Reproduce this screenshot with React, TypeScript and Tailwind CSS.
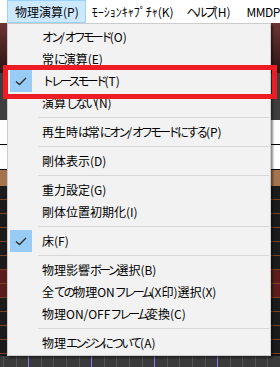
import React from 'react';

type Entry = { label: string; checked?: boolean } | 'sep';

const entries: Entry[] = [
  { label: 'オン/オフモード(O)' },
  { label: '常に演算(E)' },
  { label: 'トレースモード(T)', checked: true },
  { label: '演算しない(N)' },
  'sep',
  { label: '再生時は常にオン/オフモードにする(P)' },
  'sep',
  { label: '剛体表示(D)' },
  'sep',
  { label: '重力設定(G)' },
  { label: '剛体位置初期化(I)' },
  'sep',
  { label: '床(F)', checked: true },
  'sep',
  { label: '物理影響ボーン選択(B)' },
  { label: '全ての物理ONフレーム(X印)選択(X)' },
  { label: '物理ON/OFFフレーム変換(C)' },
  'sep',
  { label: '物理エンジンについて(A)' },
];

const gridRows = [0, 1, 2, 3, 4, 5, 6, 7, 8, 9, 10, 11];
const ticks = Array.from({ length: 22 }, (_, i) => i);

// kana in the UI font are narrower than in Noto, so squeeze them a bit
const Label = ({ text }: { text: string }) => {
  const parts = text.match(/[\u3040-\u309F]+|[\u30A0-\u30FF]+|[^\u3040-\u30FF]+/g) ?? [];
  return (
    <>
      {parts.map((p, i) => {
        const c = p.charCodeAt(0);
        if (c >= 0x3040 && c <= 0x309f) return <span key={i} className="tracking-[-2.4px]">{p}</span>;
        if (c >= 0x30a0 && c <= 0x30ff) return <span key={i} className="tracking-[-3px]">{p}</span>;
        return <span key={i}>{p}</span>;
      })}
    </>
  );
};

const Check = () => (
  <svg width="22" height="22" viewBox="0 0 22 22">
    <path d="M6 11.5 L9.5 14.5 L16 8" fill="none" stroke="#2f2f2f" strokeWidth="1.4" />
  </svg>
);

const App: React.FC = () => {
  return (
    <div className="relative w-[280px] h-[367px] overflow-hidden bg-[#262626] font-['Noto_Sans_CJK_JP']">
      {/* Menu bar */}
      <div className="h-[23px] bg-white flex items-stretch text-[12px] text-black pl-[7px] whitespace-nowrap overflow-hidden">
        <div className="pl-[7px] pr-[6px] border border-[#99d1ff] bg-[#cce8ff] flex items-center">
          <Label text="物理演算(P)" />
        </div>
        <div className="px-[6px] flex items-center">
          <span>ﾓｰｼｮﾝｷｬﾌﾟﾁｬ(K)</span>
        </div>
        <div className="px-[7px] flex items-center">
          <Label text="ヘルプ(H)" />
        </div>
        <div className="pl-[9px] flex items-center">
          <span className="tracking-[-0.5px]">MMDP</span>
        </div>
      </div>

      {/* Background editor view */}
      <div className="flex flex-col">
        <div className="h-[50px] bg-gradient-to-b from-[#6e3434] to-[#2a1414]" />
        <div className="h-[47px] bg-[#3e3e3e]" />
        <div className="h-[50px] bg-white flex flex-col">
          <div className="h-[24px]" />
          <div className="h-px bg-black" />
          <div className="flex-1" />
          <div className="h-px bg-black" />
        </div>
        <div className="h-[16px] bg-[#a5744c]" />
        <div className="h-[170px] flex flex-col bg-[#161616]">
          {gridRows.map((i) => (
            <div
              key={i}
              className={`h-[14px] border-b border-[#7a4020] ${i >= 6 && i <= 7 ? 'bg-[#5a1c1c]' : 'bg-[#1b1b1b]'}`}
            />
          ))}
        </div>
        <div className="h-[11px] bg-[#3a3a3a] flex pl-[3px]">
          {ticks.map((i) => (
            <div
              key={i}
              className={`w-[13px] h-full border-l ${i % 5 === 2 ? 'border-[#8a7cf0]' : 'border-[#555555]'}`}
            />
          ))}
        </div>
      </div>

      {/* Dropdown menu */}
      <div className="absolute left-[7px] top-[23px] w-[264px] bg-[#f2f2f2] border border-[#cccccc] shadow-[2px_2px_2px_rgba(0,0,0,0.45)] pt-[2px] pb-[1px] text-[12px] text-black whitespace-nowrap">
        {entries.map((e, i) =>
          e === 'sep' ? (
            <div key={i} className="h-[7px] flex items-center pl-[30px] pr-[1px]">
              <div className="h-px w-full bg-[#d7d7d7]" />
            </div>
          ) : (
            <div key={i} className="h-[22px] flex items-center pl-[2px]">
              <div className={`w-[22px] h-[22px] ${e.checked ? 'bg-[#99ccf5]' : ''}`}>
                {e.checked && <Check />}
              </div>
              <span className="ml-[10px]">
                <Label text={e.label} />
              </span>
            </div>
          )
        )}
      </div>

      {/* Red highlight frame */}
      <div className="absolute left-[3px] top-[65px] w-[274px] h-[34px] border-[5px] border-[#ed1c24]" />
    </div>
  );
};

export default App;
